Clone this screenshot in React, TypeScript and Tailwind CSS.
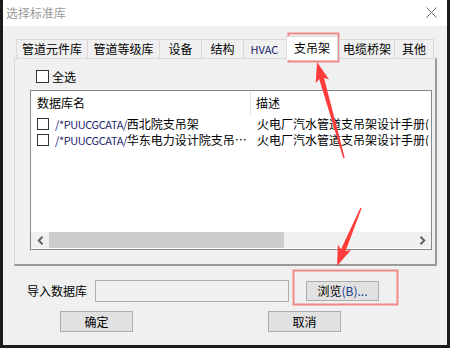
import React from 'react';

const tabs = ['管道元件库', '管道等级库', '设备', '结构', 'HVAC', '支吊架', '电缆桥架', '其他'];
const tabWidths = [71, 72, 42, 42, 42, 52, 55, 40];

const rows = [
    { name: '西北院支吊架', desc: '火电厂汽水管道支吊架设计手册(' },
    { name: '华东电力设计院支吊…', desc: '火电厂汽水管道支吊架设计手册(' },
];

const Box: React.FC<{ size?: string }> = ({ size = 'w-[13px] h-[13px]' }) => (
    <span className={`${size} shrink-0 border border-[#333] bg-white`} />
);

const App: React.FC = () => {
    return (
        <div
            className="relative w-[450px] h-[348px] bg-[#f0f0f0] border-x-[3px] border-b-[3px] border-[#1b1b1b] text-[12px] text-black overflow-hidden"
            style={{ fontFamily: '"Noto Sans CJK SC", "Microsoft YaHei", sans-serif' }}
        >
            {/* title bar */}
            <div className="h-[26px] bg-white flex items-center justify-between pl-[3px] pr-[10px]">
                <span className="text-[#9a9a9a] leading-none">选择标准库</span>
                <svg width="11" height="11" viewBox="0 0 11 11" className="mb-[2px]">
                    <path d="M0.5 0.5 L10.5 10.5 M10.5 0.5 L0.5 10.5" stroke="#666" strokeWidth="1" />
                </svg>
            </div>

            {/* tabs */}
            <div className="flex items-end ml-[13px] mt-[10px] h-[22px] relative z-10">
                {tabs.map((t, i) => {
                    const active = t === '支吊架';
                    return (
                        <div
                            key={t}
                            style={{ width: tabWidths[i] }}
                            className={
                                active
                                    ? 'h-[24px] -mb-[2px] mx-[1px] bg-white border border-b-0 border-[#d9d9d9] flex items-start justify-center pt-[3px] leading-[16px]'
                                    : 'h-[19px] bg-[#f0f0f0] border border-b-0 border-r-0 last:border-r border-[#d9d9d9] flex items-center justify-center leading-none'
                            }
                        >
                            <span className={t === 'HVAC' ? 'text-[11px] text-[#1a1a6a]' : ''}>{t}</span>
                        </div>
                    );
                })}
            </div>

            {/* tab panel */}
            <div className="ml-[11px] w-[423px] h-[208px] border-l border-t border-[#d9d9d9] border-r-2 border-b-2 border-r-[#9a9a9a] border-b-[#9a9a9a] flex flex-col">
                <div className="flex items-center gap-[3px] ml-[21px] mt-[11px] h-[13px] leading-none">
                    <Box />
                    <span>全选</span>
                </div>

                {/* list */}
                <div className="ml-[15px] mt-[7px] w-[402px] h-[160px] border border-[#828790] bg-white flex flex-col overflow-hidden">
                    <div className="flex h-[24px] shrink-0">
                        <div className="w-[220px] border-r border-[#e5e5e5] flex items-center pl-[6px] leading-none">数据库名</div>
                        <div className="flex-1 flex items-center pl-[5px] leading-none">描述</div>
                    </div>
                    <div className="flex flex-col mt-[1px]">
                        {rows.map((r) => (
                            <div key={r.name} className="flex h-[16px] items-center">
                                <div className="w-[221px] shrink-0 flex items-center pl-[6px] gap-[6px] whitespace-nowrap">
                                    <Box size="w-[12px] h-[12px]" />
                                    <span className="leading-none">
                                        <span className="text-[11px] tracking-[-0.4px] text-[#24246e]">/*PUUCGCATA/</span>
                                        {r.name}
                                    </span>
                                </div>
                                <div className="flex-1 min-w-0 pl-[5px] overflow-hidden whitespace-nowrap leading-none">{r.desc}</div>
                            </div>
                        ))}
                    </div>
                    <div className="flex-1" />
                    {/* horizontal scrollbar */}
                    <div className="h-[16px] mb-[1px] flex bg-[#f0f0f0] shrink-0">
                        <div className="w-[18px] flex items-center justify-center">
                            <svg width="7" height="9" viewBox="0 0 7 9">
                                <path d="M5.5 0.8 L1.8 4.5 L5.5 8.2" stroke="#606060" strokeWidth="2" fill="none" />
                            </svg>
                        </div>
                        <div className="w-[235px] bg-[#cdcdcd]" />
                        <div className="flex-1" />
                        <div className="w-[18px] flex items-center justify-center">
                            <svg width="7" height="9" viewBox="0 0 7 9">
                                <path d="M1.5 0.8 L5.2 4.5 L1.5 8.2" stroke="#606060" strokeWidth="2" fill="none" />
                            </svg>
                        </div>
                    </div>
                </div>
            </div>

            {/* import row */}
            <div className="flex items-center mt-[14px] ml-[24px] h-[22px]">
                <span className="w-[60px] leading-none">导入数据库</span>
                <div className="ml-[8px] w-[194px] h-[22px] border border-[#adadad] bg-[#f0f0f0]" />
                <button className="ml-[17px] w-[73px] h-[20px] border border-[#adadad] bg-[#e1e1e1] leading-none flex items-center justify-center">
                    浏览<span className="text-[#1a3a8a]">(B)...</span>
                </button>
            </div>

            {/* buttons */}
            <div className="flex mt-[9px] ml-[57px] gap-[135px]">
                <button className="w-[73px] h-[21px] border border-[#adadad] bg-[#e1e1e1] leading-none">确定</button>
                <button className="w-[73px] h-[21px] border border-[#adadad] bg-[#e1e1e1] leading-none">取消</button>
            </div>

            {/* annotations */}
            <svg className="absolute -left-[3px] top-0 pointer-events-none" width="450" height="348" viewBox="0 0 450 348">
                <rect x="288.5" y="33.5" width="50" height="28" fill="none" stroke="#f08a8a" strokeWidth="2" />
                <rect x="293.5" y="270.5" width="104" height="34" fill="none" stroke="#f08a8a" strokeWidth="2" />
                <polygon
                    points="317,62 329.1,79.4 324,77.7 344.7,157.8 343.3,158.2 319.2,79.1 315.7,83.2"
                    fill="#ff3b3b"
                />
                <polygon
                    points="337,266 350.9,250 345.6,251.1 361.6,208.3 360.4,207.7 341,249.3 337.9,244.8"
                    fill="#ff3b3b"
                />
            </svg>
        </div>
    );
};

export default App;
